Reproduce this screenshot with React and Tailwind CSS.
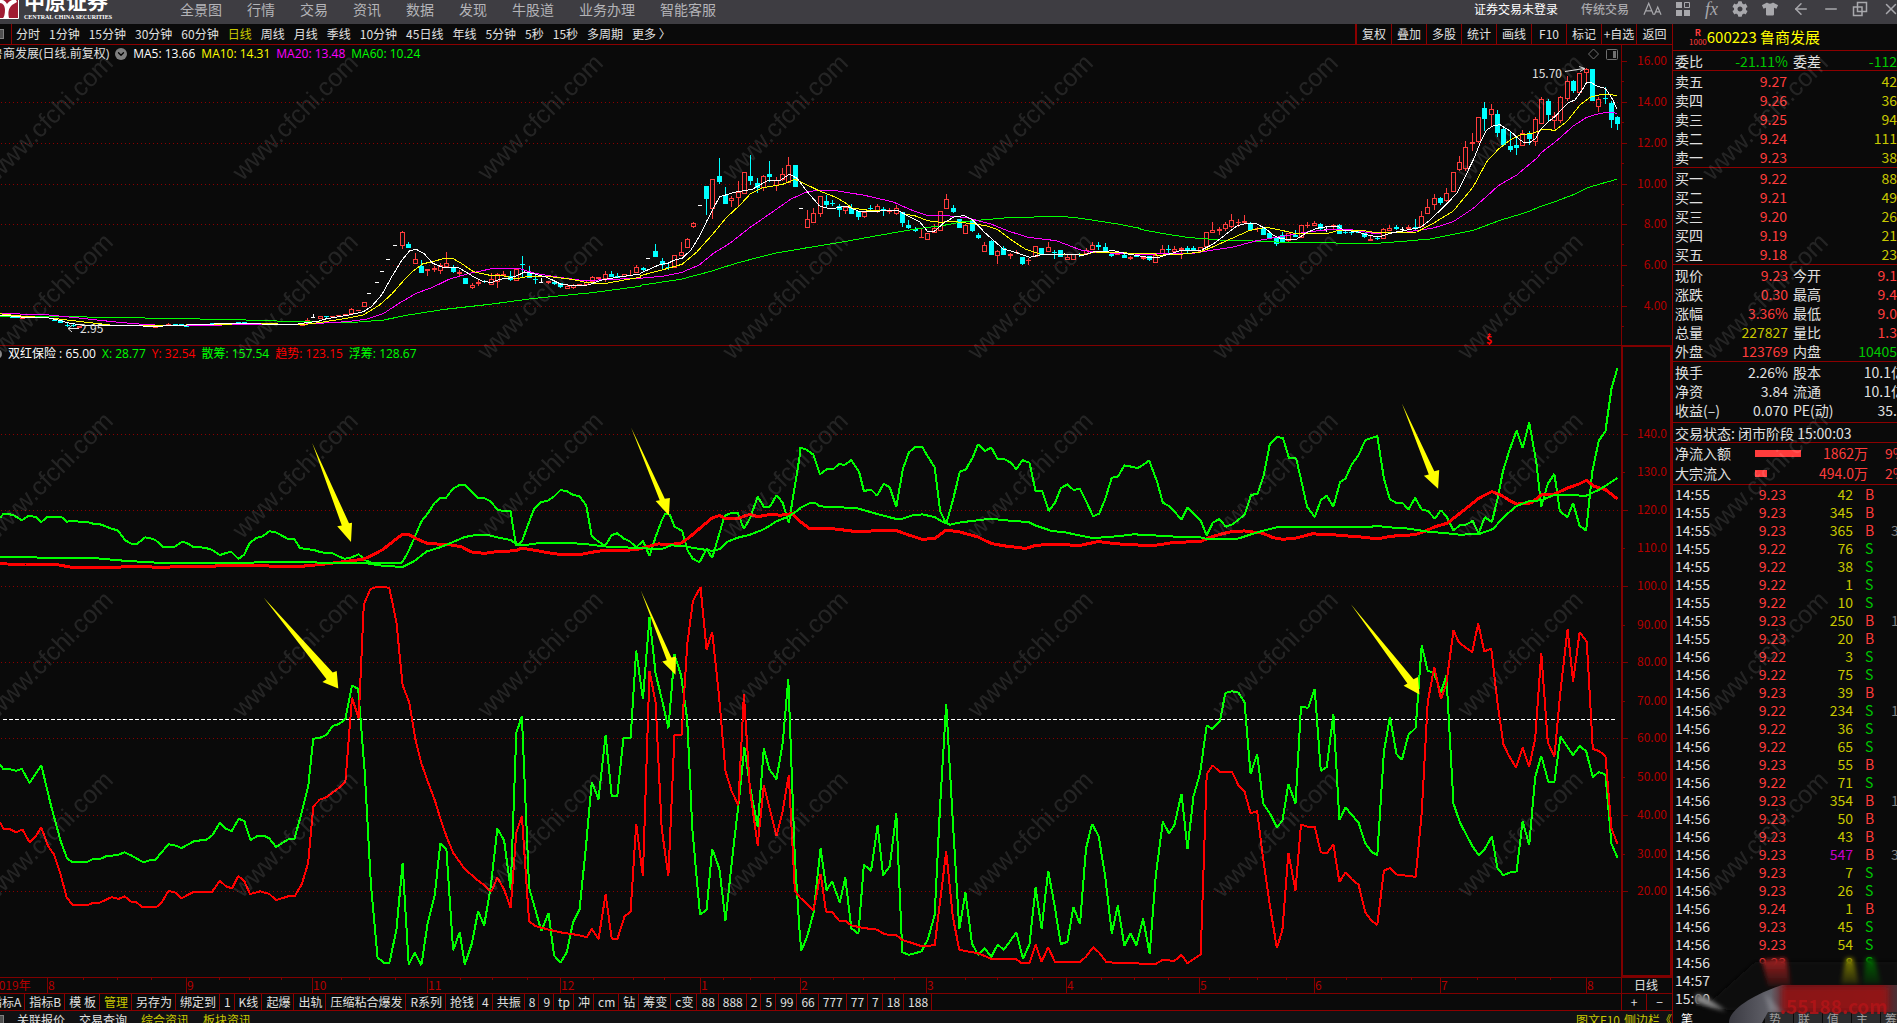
import React from "react";
import {
  FaTshirt,
  FaCog,
} from "react-icons/fa";
import { ArrowLeft, Minus, X, ChevronDown } from "lucide-react";

const navigation = ["全景图", "行情", "交易", "资讯", "数据", "发现", "牛股道", "业务办理", "智能客服"];

const periods = [
  "分时", "1分钟", "15分钟", "30分钟", "60分钟", "日线", "周线", "月线", "季线",
  "10分钟", "45日线", "年线", "5分钟", "5秒", "15秒", "多周期", "更多 〉",
];

const tools = ["复权", "叠加", "多股", "统计", "画线", "F10", "标记", "+自选", "返回"];

const templates = [
  "指标A", "指标B", "模 板", "管理", "另存为", "绑定到", "1", "K线", "起爆", "出轨",
  "压缩粘合爆发", "R系列", "抢钱", "4", "共振", "8", "9", "tp", "冲", "cm", "钻", "筹变",
  "c变", "88", "888", "2", "5", "99", "66", "777", "77", "7", "18", "188",
];

const sells = [["卖五", "9.27", "42"], ["卖四", "9.26", "36"], ["卖三", "9.25", "94"], ["卖二", "9.24", "111"], ["卖一", "9.23", "38"]];
const buys = [["买一", "9.22", "88"], ["买二", "9.21", "49"], ["买三", "9.20", "26"], ["买四", "9.19", "21"], ["买五", "9.18", "23"]];

const RED = "text-[#ff3c3c]";
const GREEN = "text-[#00c800]";
const YELLOW = "text-[#c8c800]";
const WHITE = "text-[#e0e0e0]";

const quotes = [
  ["现价", "9.23", RED, "今开", "9.1", RED],
  ["涨跌", "0.30", RED, "最高", "9.4", RED],
  ["涨幅", "3.36%", RED, "最低", "9.0", RED],
  ["总量", "227827", YELLOW, "量比", "1.3", RED],
  ["外盘", "123769", RED, "内盘", "10405", GREEN],
];

const finance = [
  ["换手", "2.26%", WHITE, "股本", "10.1亿", WHITE],
  ["净资", "3.84", WHITE, "流通", "10.1亿", WHITE],
  ["收益(–)", "0.070", WHITE, "PE(动)", "35.", WHITE],
];

// time, price, volume, side, count
const ticks = [
  ["14:55", "9.23", "42", "B"],
  ["14:55", "9.23", "345", "B"],
  ["14:55", "9.23", "365", "B", "3"],
  ["14:55", "9.22", "76", "S"],
  ["14:55", "9.22", "38", "S"],
  ["14:55", "9.22", "1", "S"],
  ["14:55", "9.22", "10", "S"],
  ["14:55", "9.23", "250", "B", "1"],
  ["14:55", "9.23", "20", "B"],
  ["14:56", "9.22", "3", "S"],
  ["14:56", "9.22", "75", "S"],
  ["14:56", "9.23", "39", "B"],
  ["14:56", "9.22", "234", "S", "1"],
  ["14:56", "9.22", "36", "S"],
  ["14:56", "9.22", "65", "S"],
  ["14:56", "9.23", "55", "B"],
  ["14:56", "9.22", "71", "S"],
  ["14:56", "9.23", "354", "B", "1"],
  ["14:56", "9.23", "50", "B"],
  ["14:56", "9.23", "43", "B"],
  ["14:56", "9.23", "547", "B", "3"],
  ["14:56", "9.23", "7", "S"],
  ["14:56", "9.23", "26", "S"],
  ["14:56", "9.24", "1", "B"],
  ["14:56", "9.23", "45", "S"],
  ["14:56", "9.23", "54", "S"],
  ["14:56", "9.23", "8", "S"],
  ["14:57"],
  ["15:00"],
];

// Each chart block has its own origin and units per pixel
const blocks = {
  priceA: { ox: 0, oy: 180, sx: 2.45, sy: 3 },
  priceB: { ox: 640, oy: 120, sx: 2.45, sy: 3 },
  priceC: { ox: 1140, oy: 50, sx: 3, sy: 3 },
  lineA: { ox: 0, oy: 400, sx: 1.96, sy: 2.6133 },
  lineB: { ox: 780, oy: 400, sx: 1.8233, sy: 2.6133 },
};

// kind (u = up, d = down, w = flat), x, high, top, bottom, low
const candles = {
  priceA: `d 12 406 408 412 412,d 30 409 409 413 413,d 42 409 410 414 414,u 55 412 412 416 416,d 133 418 419 422 422,
d 148 419 419 428 428,d 165 430 434 437 442,d 180 430 435 438 442,u 195 438 438 443 443,d 260 434 434 438 438,
u 380 439 439 443 443,u 412 429 433 436 438,d 430 432 432 435 435,d 445 432 432 435 435,d 458 436 436 440 440,
d 520 429 429 432 432,d 535 429 429 432 432,d 585 426 427 430 430,d 600 427 427 430 430,u 678 432 433 436 436,
u 695 433 433 436 436,u 710 433 433 436 436,u 725 433 433 436 436,u 740 430 430 437 437,u 754 414 421 426 428,
w 768 402 410 412 412,u 785 408 408 416 416,d 800 408 408 411 413,u 815 407 407 410 410,u 830 405 405 408 408,
u 846 402 402 405 405,u 861 384 388 402 402,u 878 391 391 394 394,u 893 367 367 381 381,w 906 338 338 338 338,
w 924 307 307 307 307,w 938 274 274 274 274,w 953 238 238 238 238,w 970 196 196 196 196,u 986 152 157 197 208,
d 1001 186 192 204 204,u 1018 220 238 251 251,d 1033 240 258 278 278,u 1047 268 268 272 288,u 1064 258 265 271 277,
u 1079 248 254 272 281,u 1094 216 250 262 262,d 1111 255 260 276 279,u 1126 270 277 281 289,d 1141 293 293 312 312,
u 1157 310 314 323 327,u 1172 300 305 313 319,d 1188 300 303 306 310,u 1204 279 297 314 314,u 1219 279 282 306 323,
u 1234 272 283 287 287,d 1250 273 289 300 304,u 1265 264 267 302 302,d 1280 228 251 255 290,d 1297 258 276 294 294,
d 1312 284 297 300 312,w 1327 294 306 308 308,u 1344 302 304 308 313,d 1358 302 305 311 315,d 1373 309 309 321 323,
u 1390 316 319 326 326,u 1405 312 314 323 327,u 1420 313 313 316 316,u 1437 304 305 314 314,u 1452 287 292 305 305,
u 1466 290 292 298 298,u 1484 273 282 298 305,d 1498 273 282 291 291,d 1514 279 288 294 294,u 1530 283 283 290 290,
u 1545 269 284 288 288,u 1560 256 262 279 279`,
  priceB: `d 8 440 444 450 455,w 22 415 415 415 415,d 38 372 393 411 411,d 55 414 423 435 447,d 69 430 441 444 449,
u 85 406 406 443 443,u 101 366 397 407 407,u 116 354 356 383 383,u 131 305 308 320 325,w 147 256 256 256 256,
d 163 198 198 237 285,u 177 178 178 268 296,d 195 114 168 186 192,d 209 201 226 251 251,u 224 228 235 242 261,
u 241 183 217 233 258,u 256 157 157 221 221,d 271 105 168 183 195,d 288 174 189 203 218,u 302 165 169 204 213,
d 317 122 162 171 186,u 334 171 181 197 213,u 349 144 163 179 184,u 364 111 136 188 188,d 381 135 135 200 200,
w 395 265 265 265 265,u 410 270 298 323 323,u 425 264 280 308 308,u 442 229 229 281 291,d 457 225 243 255 264,
d 471 240 248 252 258,d 489 252 258 271 290,u 503 260 262 273 282,d 518 252 264 282 282,d 535 273 273 291 300,
u 550 272 276 290 293,d 565 255 263 268 276,u 582 252 259 273 278,d 597 261 267 273 288,u 611 263 272 276 282,
u 628 256 265 281 285,d 643 276 276 309 321,d 658 300 315 324 327,d 675 321 328 332 336,u 689 325 350 354 354,
u 704 339 339 359 359,u 721 313 325 338 338,u 736 274 274 332 332,u 751 222 238 266 266,d 768 255 264 276 280,
d 783 297 297 324 324,u 797 312 314 341 341,d 814 297 303 333 336,d 829 339 346 354 357,u 844 366 376 395 395,
d 861 360 363 405 405,u 876 390 394 407 432,d 890 378 384 405 405,u 908 398 402 407 418,u 922 390 395 398 403,
d 937 411 411 432 435,u 953 415 420 424 435,u 969 379 379 410 410,d 984 384 384 404 404,u 1001 366 380 395 395,
d 1016 390 395 400 417,d 1030 390 390 411 411,u 1047 405 411 419 419,u 1062 403 403 419 419,d 1076 400 402 406 411,
u 1094 384 390 403 403,u 1109 366 376 390 390,d 1123 366 375 381 390,d 1140 369 381 392 392,d 1155 402 402 408 412,
u 1170 400 402 406 406,d 1187 402 404 414 414,u 1202 409 412 416 420,d 1216 402 406 412 412`,
  priceC: `u 10 618 620 626 629,d 28 618 618 629 633,u 46 610 615 638 638,u 67 584 598 612 612,d 85 585 597 600 612,
u 104 588 597 605 610,u 124 590 595 600 627,d 142 588 594 602 608,d 161 588 595 599 603,u 180 592 592 606 606,
u 200 547 547 591 591,u 217 515 539 548 548,u 238 530 538 544 555,u 256 516 523 538 542,u 274 492 511 530 534,
u 295 508 515 520 530,u 313 494 514 520 520,d 331 516 519 540 540,u 352 530 534 538 545,d 370 533 533 555 555,
d 388 546 549 564 564,d 409 564 564 582 587,d 427 546 556 577 577,u 445 550 550 573 577,d 466 540 555 560 560,
u 484 526 526 563 563,u 502 515 525 529 534,u 523 513 519 527 527,d 541 519 522 537 540,w 560 532 538 540 546,
u 580 522 525 530 540,d 598 522 524 552 552,d 616 542 546 549 553,d 634 543 546 549 555,d 654 542 546 550 550,
d 673 548 548 560 563,u 691 555 568 574 574,d 712 560 564 567 570,u 730 534 538 566 566,u 748 525 533 542 542,
d 769 525 531 537 540,w 787 532 538 541 546,u 805 525 532 536 536,d 826 507 532 535 540,u 844 484 499 532 532,
u 862 447 472 491 491,u 883 433 445 464 479,d 901 441 444 459 464,u 919 414 430 452 457,u 940 367 367 425 425,
u 958 318 337 359 364,u 976 274 292 356 364,u 997 250 276 281 303,u 1015 202 202 275 278,d 1033 156 174 207 243,
u 1054 163 178 194 232,d 1072 180 192 249 261,d 1090 231 237 285 285,d 1111 243 288 300 306,d 1129 264 285 294 315,
u 1147 240 248 287 287,d 1168 243 250 267 285,u 1186 202 208 275 287,u 1204 142 146 223 223,d 1225 147 153 195 213,
u 1243 186 199 212 237,u 1261 138 142 212 218,u 1282 78 94 146 152,d 1300 90 94 123 129,u 1318 70 70 130 130,
u 1339 54 58 68 98,d 1357 57 57 153 153,u 1375 141 148 171 187,d 1396 111 144 147 162,d 1414 153 159 210 234,
d 1432 198 201 222 240`,
};

const averages = [
  {
    name: "MA60",
    color: "#00ff00",
    priceA: "0,409 130,409 250,412 400,415 580,419 700,424 820,427 880,426 940,420 1000,405 1090,388 1200,373 1310,355 1450,338 1568,319",
    priceB: "0,496 100,478 170,455 240,428 330,400 410,383 500,365 590,345 680,326 740,317 790,305 900,293 1030,289 1080,295 1170,312 1225,325",
    priceC: "0,538 60,549 140,562 240,570 370,574 460,579 540,577 610,580 710,580 790,574 870,567 930,555 1000,541 1080,511 1160,487 1200,470 1240,457 1300,434 1340,414 1380,402 1430,388",
  },
  {
    name: "MA20",
    color: "#ff00ff",
    priceA: "0,400 120,405 200,415 290,427 360,434 420,437 520,436 600,433 720,434 780,430 850,425 900,417 940,400 980,368 1020,340 1060,322 1100,298 1150,280 1210,265 1270,265 1310,280 1370,292 1430,302 1500,298 1568,295",
    priceB: "0,475 60,468 103,457 145,435 180,400 220,370 270,322 320,280 370,237 410,215 440,211 480,212 550,226 620,246 665,270 700,285 760,288 800,293 860,312 900,332 950,352 1020,362 1080,390 1120,398 1180,400 1225,403",
    priceC: "0,613 160,610 220,600 280,591 350,572 420,560 500,546 580,538 640,540 700,550 800,546 880,534 940,515 1000,475 1050,430 1075,407 1130,375 1190,325 1205,307 1250,272 1300,228 1340,202 1380,190 1410,187 1430,190",
  },
  {
    name: "MA10",
    color: "#ffff00",
    priceA: "0,401 40,407 130,415 200,425 270,435 380,438 420,436 540,433 600,431 680,432 740,434 770,430 850,415 890,405 930,375 960,342 990,300 1010,275 1035,252 1065,243 1090,235 1110,236 1130,250 1160,275 1200,286 1235,288 1265,296 1290,290 1340,289 1400,298 1440,308 1480,311 1530,300 1568,292",
    priceB: "0,467 60,448 103,433 140,395 180,340 210,295 245,255 270,222 300,203 350,193 380,178 410,195 440,213 480,232 505,250 520,264 555,270 630,270 650,282 675,288 705,302 735,307 765,304 820,312 850,318 875,328 910,360 945,388 985,404 1090,404 1115,396 1180,398 1225,401",
    priceC: "0,610 45,611 50,616 130,612 180,606 220,590 280,563 330,541 380,532 420,540 460,549 510,552 560,551 600,540 660,540 710,548 830,546 880,520 940,483 1000,410 1040,335 1075,298 1110,270 1140,255 1180,249 1210,238 1245,241 1280,215 1320,165 1350,142 1385,133 1432,136",
  },
  {
    name: "MA5",
    color: "#ffffff",
    priceA: "0,405 60,412 120,414 150,422 165,428 200,435 260,438 310,436 350,438 400,438 440,436 500,433 580,430 640,432 720,434 750,428 780,424 800,416 825,411 855,405 890,395 910,380 935,345 960,290 985,240 1003,213 1020,208 1040,222 1060,250 1085,262 1125,264 1160,290 1185,305 1205,307 1225,298 1250,294 1270,285 1285,276 1310,282 1340,292 1375,313 1400,316 1440,315 1475,300 1510,292 1568,282",
    priceB: "0,460 50,433 68,430 85,420 103,415 125,390 145,350 165,300 195,230 235,216 275,208 315,180 345,180 366,163 385,175 410,215 440,258 460,265 480,264 505,258 540,276 575,274 630,270 660,290 685,305 705,335 720,335 745,308 770,290 795,287 815,300 845,338 890,387 920,397 955,412 980,405 1040,402 1085,406 1110,396 1160,392 1195,402 1225,408",
    priceC: "0,618 30,623 60,621 120,602 185,600 220,582 255,555 290,528 320,520 350,522 375,535 400,555 420,565 450,569 470,567 500,548 530,535 560,530 595,530 610,540 650,545 690,557 720,560 750,550 800,540 840,533 870,510 920,462 950,430 975,380 1000,330 1020,280 1040,240 1060,227 1080,224 1110,243 1140,270 1155,279 1170,277 1187,265 1200,240 1225,215 1245,200 1265,178 1285,158 1305,150 1325,122 1340,97 1355,99 1375,110 1395,115 1410,135 1420,152 1430,177",
  },
];

const indicators = [
  {
    name: "散筹",
    color: "#00ff00",
    width: 2,
    lineA: "0,308 7,297 18,297 22,301 28,302 43,314 57,302 70,306 81,319 93,305 120,305 131,318 143,316 155,318 170,318 182,323 192,323 205,329 218,336 231,341 245,366 258,376 269,376 284,359 294,361 305,366 319,384 342,384 356,371 365,373 379,384 402,386 416,392 431,405 453,396 467,415 478,405 490,373 502,361 515,356 528,343 541,346 552,354 563,362 577,364 588,387 603,390 615,392 627,397 640,400 652,401 664,409 676,415 690,411 703,403 715,418 728,425 788,425 800,397 812,361 826,317 838,297 852,269 863,256 874,256 888,231 901,222 911,222 924,239 936,256 949,256 962,265 975,287 987,290 1001,290 1005,330 1012,380 1023,370 1035,325 1047,284 1060,267 1074,263 1086,252 1098,236 1110,237 1123,248 1136,252 1149,275 1160,356 1173,370 1186,381 1199,353 1210,348 1222,362 1234,369 1247,385 1260,368 1273,408 1285,358 1297,315 1304,297 1313,300 1322,331 1337,342 1348,395 1358,415 1371,424 1385,389 1396,413 1408,358 1420,303 1433,295 1446,295 1458,337 1470,309 1485,253 1497,279 1509,279 1522,249 1534,268 1546,322 1556,240 1568,142",
    lineB: "37,124 48,130 61,143 73,194 85,181 97,181 108,166 117,170 130,157 144,187 153,238 166,234 177,250 189,219 200,228 212,279 224,180 235,137 247,122 259,122 268,144 282,176 292,290 303,324 315,263 328,187 339,181 351,151 361,116 374,133 385,124 397,154 408,154 420,163 431,181 442,157 455,164 466,238 478,237 490,290 502,267 512,231 524,220 535,235 547,232 559,267 571,304 582,297 593,259 605,203 616,201 628,171 640,174 652,178 663,169 673,158 688,215 698,268 710,278 722,296 732,313 743,281 756,299 767,315 778,354 789,321 801,311 813,331 825,325 847,300 859,248 871,245 882,197 893,115 906,97 917,99 928,152 941,152 952,220 961,279 975,306 986,262 997,250 1009,279 1021,215 1031,205 1043,167 1055,144 1067,105 1089,94 1101,205 1112,260 1123,268 1135,269 1146,286 1158,256 1170,286 1181,290 1194,310 1205,288 1215,304 1228,341 1240,327 1252,325 1263,316 1274,349 1285,306 1298,319 1308,260 1318,187 1330,132 1343,80 1354,126 1366,58 1379,163 1388,278 1400,219 1412,193 1422,291 1436,306 1446,269 1458,329 1470,341 1481,187 1493,106 1505,82 1516,-30 1527,-84",
  },
  {
    name: "趋势",
    color: "#ff0000",
    width: 3,
    lineA: "0,428 50,430 110,430 140,437 230,437 268,434 305,437 410,435 430,433 515,432 540,436 580,436 612,432 640,428 690,420 712,416 728,407 750,391 770,370 788,352 802,352 815,362 838,375 880,378 905,384 924,397 950,401 975,396 1010,394 1023,387 1045,392 1074,399 1100,404 1140,403 1173,395 1195,393 1220,394 1250,390 1270,383 1290,376 1313,378 1335,374 1350,360 1371,336 1396,308 1410,302 1420,309 1448,309 1460,303 1470,299 1485,305 1510,299 1530,301 1552,297 1568,318",
    lineB: "37,318 55,337 95,336 145,345 177,341 212,341 235,353 259,364 282,362 303,340 328,345 361,358 385,375 408,381 448,388 466,380 495,377 547,380 580,370 616,376 652,379 688,379 720,372 767,370 782,360 800,352 820,345 847,342 880,348 900,360 917,364 940,361 970,350 1000,351 1030,355 1060,358 1089,363 1115,356 1158,352 1175,344 1194,331 1217,322 1230,307 1252,282 1274,257 1298,239 1315,249 1330,262 1343,272 1370,269 1388,248 1412,246 1436,230 1458,219 1470,210 1485,226 1505,234 1527,259",
  },
  {
    name: "浮筹",
    color: "#00ff00",
    width: 2,
    lineA: "0,410 43,411 143,413 157,412 192,414 232,419 268,422 319,426 365,426 480,426 510,424 560,424 640,425 715,426 754,434 790,436 812,421 836,396 863,385 888,371 911,358 936,352 960,354 985,362 1001,366 1015,379 1030,379 1050,375 1074,373 1110,373 1150,377 1190,383 1240,386 1285,389 1300,388 1315,380 1337,381 1360,387 1396,394 1410,390 1425,371 1445,360 1470,352 1497,338 1522,317 1546,304 1568,284",
    lineB: "37,282 54,270 65,270 73,278 95,279 141,283 177,298 212,311 224,310 240,302 259,299 270,302 282,306 296,318 310,326 328,320 345,317 385,310 408,314 453,319 466,328 495,342 520,346 547,354 571,361 616,356 645,351 685,354 720,357 767,359 780,364 836,362 859,351 882,341 910,331 940,331 970,333 1067,333 1089,329 1112,333 1140,335 1181,344 1215,348 1240,352 1275,350 1300,337 1320,305 1343,277 1366,264 1388,262 1412,248 1470,250 1493,235 1510,220 1527,203",
  },
  {
    name: "X",
    color: "#00ff00",
    width: 2,
    lineA: "0,953 6,964 20,965 32,969 43,964 58,1001 81,954 100,1060 119,1153 132,1199 143,1208 169,1208 182,1200 195,1200 209,1192 231,1189 244,1182 257,1190 281,1208 293,1203 304,1202 330,1161 343,1164 356,1171 380,1153 404,1149 416,1138 431,1105 441,1119 454,1127 468,1094 479,1101 491,1150 505,1139 516,1138 528,1146 541,1168 565,1148 577,1147 592,1075 604,1010 614,885 627,883 640,875 652,852 664,847 677,834 690,746 702,755 715,975 727,1265 740,1457 754,1472 763,1472 777,1385 789,1211 801,1475 813,1445 826,1477 838,1368 852,1295 863,1159 875,1173 888,1438 901,1391 911,1475 925,1420 937,1336 949,1373 962,1270 975,1120 988,1151 1001,1280 1012,870 1023,827 1037,1275 1050,1335 1061,1388 1075,1340 1086,1452 1099,1470 1111,1443 1123,1365 1136,1331 1149,1160 1160,998 1173,1044 1187,877 1199,1034 1210,1034 1222,883 1236,883 1247,655 1260,782 1273,568 1285,715 1297,780 1310,858 1322,665 1335,720 1347,835 1357,1120 1372,1345 1385,1332 1396,1173 1410,1225 1422,1360 1437,1175 1448,1050 1459,907 1470,1010 1485,1115 1497,910 1508,966 1522,991 1534,897 1545,729 1558,1200 1568,1405",
    lineB: "37,1410 39,1439 50,1400 61,1340 74,1172 85,1281 95,1258 109,1313 119,1248 130,1380 143,1395 153,1214 166,1231 178,1112 188,1242 200,1219 212,1080 223,1443 235,1450 258,1441 270,1408 282,1345 292,1060 303,794 315,1100 327,1383 338,1287 350,1420 361,1450 373,1432 385,1456 397,1423 408,1437 431,1391 443,1461 455,1422 466,1274 477,1382 489,1230 501,1325 512,1422 524,1416 535,1325 547,1370 558,1172 569,1108 581,1140 593,1245 605,1394 616,1321 628,1427 639,1394 650,1425 662,1355 674,1447 685,1245 698,1102 709,1132 719,1112 732,1029 743,1173 754,1036 766,975 778,850 788,860 802,840 812,766 824,761 836,765 847,790 858,978 870,925 881,1055 893,1080 906,1116 916,1100 927,1003 940,1055 950,802 963,804 975,755 986,969 997,959 1009,822 1020,1098 1031,1065 1055,1105 1067,1158 1078,1180 1089,1190 1101,920 1112,828 1124,925 1134,940 1146,875 1159,857 1170,641 1181,708 1192,712 1205,765 1215,720 1228,1055 1240,1105 1262,1165 1274,1190 1285,1173 1298,1140 1308,1223 1319,1242 1330,1235 1343,1232 1354,1101 1366,1163 1377,985 1388,930 1401,998 1412,998 1423,880 1446,928 1458,904 1470,918 1482,986 1493,972 1505,979 1516,1160 1527,1196",
  },
  {
    name: "Y",
    color: "#ff0000",
    width: 2,
    lineA: "0,1104 7,1121 20,1122 32,1130 44,1122 58,1156 69,1142 81,1117 94,1165 106,1188 119,1241 131,1301 143,1320 172,1320 183,1314 195,1314 219,1299 232,1304 244,1297 257,1311 267,1312 279,1326 306,1326 318,1311 330,1283 343,1287 356,1302 380,1285 416,1285 431,1256 443,1271 455,1276 467,1244 479,1258 490,1291 510,1284 528,1291 541,1307 565,1297 578,1296 592,1264 604,1210 614,1062 627,1044 640,1038 664,1014 677,998 690,778 703,832 713,535 726,494 740,488 754,489 763,491 777,580 789,745 802,790 814,885 826,950 840,1003 852,1045 863,1094 875,1140 888,1183 911,1226 937,1256 949,1268 963,1285 975,1248 988,1279 1001,1328 1012,1130 1023,1088 1037,1363 1050,1375 1075,1384 1098,1391 1136,1399 1150,1404 1160,1382 1173,1409 1187,1292 1199,1407 1210,1409 1224,1350 1236,1337 1247,1108 1260,1245 1273,709 1285,790 1297,1120 1310,1244 1322,875 1336,875 1347,640 1358,525 1373,489 1385,652 1396,606 1409,770 1422,970 1434,1022 1447,1059 1458,769 1470,1020 1485,1164 1497,1006 1522,1140 1533,1082 1546,980 1558,1283 1568,1300",
    lineB: "37,1301 61,1333 74,1238 84,1337 95,1338 108,1361 119,1361 130,1373 153,1380 177,1384 188,1394 200,1399 212,1399 223,1411 258,1427 282,1425 292,1310 303,1180 315,1350 327,1437 361,1446 385,1460 431,1462 440,1471 455,1472 466,1423 477,1468 489,1430 501,1468 547,1468 558,1455 571,1430 582,1444 595,1469 616,1471 685,1474 698,1463 719,1466 732,1450 743,1472 754,1461 767,1449 778,978 789,955 802,972 824,972 836,1007 847,1023 858,1080 870,1074 881,1200 893,1320 906,1432 916,1385 927,1183 940,1282 950,1109 963,1116 975,1115 986,1182 997,1185 1009,1161 1020,1260 1031,1234 1043,1253 1055,1267 1067,1338 1078,1360 1089,1372 1101,1230 1112,1223 1124,1240 1159,1246 1170,1080 1181,790 1193,697 1205,782 1215,740 1228,602 1238,634 1262,659 1273,584 1284,657 1297,650 1308,790 1319,900 1330,932 1342,960 1354,909 1366,958 1377,885 1388,662 1400,895 1412,932 1423,760 1436,599 1446,736 1458,607 1471,632 1482,912 1493,917 1505,930 1516,1120 1527,1160",
  },
];

const arrows = [
  ["lineA", "612,112 684,322 690,321 688,371 661,330 670,328"],
  ["lineA", "1237,72 1303,258 1313,256 1311,302 1285,264 1293,262"],
  ["lineA", "517,517 652,712 660,708 663,754 632,737 640,730"],
  ["lineA", "1256,498 1316,673 1325,670 1324,718 1298,683 1307,680"],
  ["lineB", "1134,9 1193,186 1202,183 1200,232 1174,198 1183,195"],
  ["lineB", "1041,534 1155,730 1163,724 1166,770 1137,747 1144,741"],
];

const priceAxis = [["16.00", 61], ["14.00", 102], ["12.00", 143], ["10.00", 184], ["8.00", 224], ["6.00", 265], ["4.00", 306]];
const lowerAxis = [
  ["140.0", 434], ["130.0", 472], ["120.0", 510], ["110.0", 548], ["100.0", 586], ["90.00", 625], ["80.00", 662],
  ["70.00", 701], ["60.00", 738], ["50.00", 777], ["40.00", 815], ["30.00", 854], ["20.00", 891],
];
const months = [["8", 47], ["9", 186], ["10", 312], ["11", 427], ["12", 560], ["1", 700], ["2", 800], ["3", 926], ["4", 1066], ["5", 1199], ["6", 1314], ["7", 1440], ["8", 1586]];
const weeks = [83, 117, 151, 219, 249, 281, 341, 369, 395, 460, 492, 527, 593, 633, 664, 723, 750, 774, 833, 863, 894, 965, 997, 1032, 1101, 1134, 1168, 1229, 1257, 1286, 1346, 1381, 1411, 1477, 1515, 1550];

const toPoints = (block, text) => {
  const { ox, oy, sx, sy } = blocks[block];
  return text
    .split(" ")
    .map((pair) => {
      const [x, y] = pair.split(",").map(Number);
      return `${(ox + x / sx).toFixed(1)},${(oy + y / sy).toFixed(1)}`;
    })
    .join(" ");
};

const Candle = ({ block, row }) => {
  const { ox, oy, sx, sy } = blocks[block];
  const [kind, ...nums] = row.trim().split(" ");
  const x = Math.floor(ox + Number(nums[0]) / sx);
  const [high, top, bottom, low] = nums.slice(1).map((n) => Math.round(oy + Number(n) / sy));
  if (kind === "w") {
    return (
      <g fill="#fff">
        <rect x={x - 2} y={top} width="4" height="1" />
        {low > high && <rect x={x} y={high} width="1" height={low - high} />}
      </g>
    );
  }
  const height = Math.max(bottom - top, 1);
  if (kind === "d") {
    return (
      <g fill="#00ffff">
        <rect x={x - 2} y={top} width="5" height={height} />
        <rect x={x} y={high} width="1" height={Math.max(low - high, 1)} />
      </g>
    );
  }
  return (
    <g fill="#ff3c3c">
      {height < 3 ? (
        <rect x={x - 2} y={top} width="5" height={height} />
      ) : (
        <path
          fillRule="evenodd"
          d={`M${x - 2} ${top}h5v${height}h-5zM${x - 1} ${top + 1}v${height - 2}h3v${2 - height}z`}
        />
      )}
      {top > high && <rect x={x} y={high} width="1" height={top - high} />}
      {low > bottom && <rect x={x} y={bottom} width="1" height={low - bottom} />}
    </g>
  );
};

const Chart = () => (
  <svg viewBox="0 45 1672 949" preserveAspectRatio="xMinYMin meet" className="block h-full w-full">
    <g shapeRendering="crispEdges">
      {/* Grid */}
      <g stroke="#8c0000" strokeDasharray="1 3">
        {priceAxis.slice(1).map(([label, y]) => (
          <path key={label} d={`M1 ${y}.5H1618`} />
        ))}
        {lowerAxis.filter((_, i) => i % 2 === 0).map(([label, y]) => (
          <path key={label} d={`M1 ${y}.5H1618`} />
        ))}
      </g>
      <path d="M3 719.5H1615" stroke="#fff" strokeDasharray="4 2" />

      {/* Frame and ticks */}
      <g fill="none" stroke="#800000">
        <path d="M0 345.5H1672M1621.5 45V346" />
        <path d="M1622 346V976H1671V346Z" strokeWidth="2" />
        {priceAxis.map(([label, y]) => (
          <path key={label} d={`M1621 ${y}.5h6M1621 ${y + 20}.5h3`} />
        ))}
        {lowerAxis.map(([label, y], i) => (
          <path key={label} d={`M1622 ${y}.5h${i % 2 ? 3 : 6}`} />
        ))}
        <path d="M0 977.5H1672M0 993.5H1672M1621.5 977V993" />
        {months.map(([label, x]) => (
          <path key={x} d={`M${x}.5 977V993`} />
        ))}
        {weeks.map((x) => (
          <path key={x} d={`M${x}.5 977v3`} />
        ))}
      </g>

      {/* Candles */}
      {Object.keys(candles).map((block) =>
        candles[block].split(",").map((row) => <Candle key={block + row} block={block} row={row} />)
      )}

      {/* Moving averages */}
      {averages.map((line) => (
        <g key={line.name} fill="none" stroke={line.color}>
          <polyline points={`${toPoints("priceA", line.priceA)} ${toPoints("priceB", line.priceB)} ${toPoints("priceC", line.priceC)}`} />
        </g>
      ))}

      {/* Indicator lines */}
      {indicators.map((line) => (
        <polyline
          key={line.name}
          fill="none"
          stroke={line.color}
          strokeWidth={line.width}
          strokeLinejoin="bevel"
          points={`${toPoints("lineA", line.lineA)} ${toPoints("lineB", line.lineB)}`}
        />
      ))}
    </g>

    {arrows.map(([block, points]) => (
      <polygon key={points} points={toPoints(block, points)} fill="#ffff00" />
    ))}

    {/* Axis labels */}
    <g fill="#b40000" fontSize="12" textAnchor="end">
      {[...priceAxis, ...lowerAxis].map(([label, y]) => (
        <text key={label} x="1667" y={y + 4}>{label}</text>
      ))}
    </g>
    <g fill="#b40000" fontSize="12">
      <text x="-8" y="990">2019年</text>
      {months.map(([label, x]) => (
        <text key={x} x={x + 1} y="990">{label}</text>
      ))}
    </g>
    <text x="1634" y="990" fontSize="12" fill="#e0e0e0">日线</text>

    {/* High and low marks */}
    <g fontSize="12" fill="#e0e0e0">
      <text x="1532" y="78">15.70</text>
      <text x="80" y="333">2.95</text>
    </g>
    <g fill="none" stroke="#e0e0e0">
      <path d="M1565 71.5L1584 68.5M1579 66.5L1585 68.5L1580 71.5" />
      <path d="M79 328.5H68M72 325.5L68 328.5L72 332" />
    </g>
    <text x="1486" y="344" fontSize="11" fontWeight="bold" fill="#ff0000">$</text>
    <path d="M1489.5 333l-2 2h4z" fill="#ff0000" />

    {/* Corner controls */}
    <path d="M1593.5 49l5 5-5 5-5-5z" fill="none" stroke="#707070" />
    <rect x="1606.5" y="49.5" width="11" height="10" rx="1" fill="none" stroke="#707070" />
    <rect x="1613" y="51" width="3" height="7" fill="#707070" />
  </svg>
);

const Logo = () => (
  <svg viewBox="0 0 116 24" className="h-6 w-[116px] shrink-0">
    <path d="M0 0h18v18H0z" fill="#a01c32" />
    <path d="M0 3c3 0 5 3 5 7s-1 7-2 8h6c-1-5-1-9 3-13l5-3-1-2h-4C9 1 8 3 7 4 6 2 4 0 2 0H0z" fill="#fff" />
    <path d="M0 18.500h18.500V0" fill="none" stroke="#fff" />
    <text x="24" y="9" fontSize="21" fontWeight="700" fill="#fff">中原证券</text>
    <text x="24" y="19" fontSize="6" fontWeight="700" fill="#fff" fontFamily="Liberation Serif, serif">CENTRAL CHINA SECURITIES</text>
  </svg>
);

const Header = () => (
  <header className="flex h-6 shrink-0 items-start overflow-hidden bg-[#3e3d42]">
    <Logo />
    <nav className="ml-16 flex h-[18px] items-center gap-[25px] text-sm leading-[18px] text-[#b4b4b8]">
      {navigation.map((item) => (
        <a key={item} href="#" className="whitespace-nowrap">{item}</a>
      ))}
    </nav>
    <div className="ml-auto flex h-[18px] items-center whitespace-nowrap text-xs leading-[18px] text-[#a8a8ac]">
      <button className="text-white">证券交易未登录</button>
      <button className="ml-[23px] font-medium">传统交易</button>
      <div className="ml-3.5 flex w-[254px] shrink-0 items-center gap-[14px]">
        <button aria-label="字体" className="w-[18px]">
          <svg viewBox="0 0 20 16" className="h-4 w-[19px]" fill="none" stroke="currentColor" strokeWidth="1.300">
            <path d="M1 14L6 2l5 12M3 10h6M12 14l3.500-8L19 14M13 11h5" />
          </svg>
        </button>
        <button aria-label="布局" className="w-4">
          <svg viewBox="0 0 16 16" className="size-4" fill="currentColor">
            <path d="M1 1h6v6H1zM1 9h6v6H1zM9 9h6v6H9z" />
            <path d="M9.500 1.500h5v5h-5z" fill="none" stroke="currentColor" />
          </svg>
        </button>
        <button aria-label="公式" className="w-4 font-['Liberation_Serif',serif] text-lg leading-4 italic">fx</button>
        <button aria-label="设置" className="w-4"><FaCog className="size-4" /></button>
        <button aria-label="皮肤" className="w-4"><FaTshirt className="size-4" /></button>
        <button aria-label="后退" className="w-4"><ArrowLeft className="size-[18px]" /></button>
        <button aria-label="最小化" className="w-4"><Minus className="size-[18px]" /></button>
        <button aria-label="还原" className="w-4">
          <svg viewBox="0 0 16 16" className="size-4" fill="none" stroke="currentColor" strokeWidth="1.500">
            <path d="M5.500 1.500h9v9h-9zM10 6v8.500H1.500V6z" />
          </svg>
        </button>
        <button aria-label="关闭" className="w-4"><X className="size-[18px]" /></button>
      </div>
    </div>
  </header>
);

const Toolbar = () => (
  <div className="flex h-[21px] shrink-0 items-stretch border-b border-[#8c0000] text-xs leading-5 whitespace-nowrap text-[#e0e0e0]">
    <div className="flex w-3 items-center border-r border-[#8c0000]">
      <span className="h-2.5 w-1 border border-l-0 border-[#808080] bg-[#505050]"></span>
    </div>
    <div className="ml-1 flex gap-[9px]">
      {periods.map((item) => (
        <button key={item} className={item === "日线" ? "text-[#c8c800]" : ""}>{item}</button>
      ))}
    </div>
    <div className="ml-auto flex border-l-2 border-[#8c0000]">
      {tools.map((item) => (
        <button key={item} className="w-[35px] border-r border-[#8c0000] text-center last:border-r-0">{item}</button>
      ))}
    </div>
  </div>
);

const ChartPanel = () => (
  <section className="relative min-h-0 flex-1">
    <Chart />
    <div className="absolute top-0 -left-[9px] flex items-center gap-1.5 font-['Open_Sans','Noto_Sans_CJK_SC',sans-serif] text-xs leading-[17px] whitespace-nowrap">
      <span className="text-[#e0e0e0]">鲁商发展(日线.前复权)</span>
      <button aria-label="展开" className="flex size-3 items-center justify-center rounded-full bg-[#808080] text-black">
        <ChevronDown className="size-2.5" strokeWidth={3} />
      </button>
      <span className="text-white">MA5: 13.66</span>
      <span className="text-[#ffff00]">MA10: 14.31</span>
      <span className="text-[#ff00ff]">MA20: 13.48</span>
      <span className="text-[#00ff00]">MA60: 10.24</span>
    </div>
    <div className="absolute top-[300px] -left-2 flex items-center gap-1.5 font-['Open_Sans','Noto_Sans_CJK_SC',sans-serif] text-xs leading-[17px] whitespace-nowrap">
      <span className="size-2.5 rounded-full bg-[#808080]"></span>
      <span className="text-white">双红保险 : 65.00</span>
      <span className="text-[#00ff00]">X: 28.77</span>
      <span className="text-[#ff0000]">Y: 32.54</span>
      <span className="text-[#00ff00]">散筹: 157.54</span>
      <span className="text-[#ff0000]">趋势: 123.15</span>
      <span className="text-[#00ff00]">浮筹: 128.67</span>
    </div>
  </section>
);

const TemplateBar = () => (
  <div className="flex h-[17px] shrink-0 border-b border-[#8c0000] text-xs leading-4 whitespace-nowrap text-[#e0e0e0]">
    <div className="-ml-[14px] flex">
      {templates.map((item) => (
        <button key={item} className={`border-r border-[#8c0000] pr-[3px] pl-1 ${item === "管理" ? "text-[#c8c800]" : ""}`}>
          {item}
        </button>
      ))}
    </div>
    <div className="ml-auto flex border-l border-[#8c0000]">
      <button className="w-[25px] border-r border-[#8c0000]">+</button>
      <button className="w-[25px]">−</button>
    </div>
  </div>
);

const NewsBar = () => (
  <div className="flex h-3 shrink-0 items-start overflow-hidden bg-[#111113] text-xs leading-[18px] whitespace-nowrap text-[#e0e0e0]">
    <span className="mt-1 h-2.5 w-1 shrink-0 border border-l-0 border-[#808080] bg-[#505050]"></span>
    <div className="ml-[13px] flex gap-[14px]">
      <a href="#">关联报价</a>
      <a href="#">交易查询</a>
      <a href="#" className="text-[#c8c800]">综合资讯</a>
      <a href="#" className="text-[#c8c800]">板块资讯</a>
    </div>
    <div className="ml-auto flex gap-1 text-[#c8c800]">
      <a href="#">图文F10</a>
      <a href="#">侧边栏《</a>
    </div>
  </div>
);

const OrderTable = ({ rows }) => (
  <div className="shrink-0 border-b border-[#8c0000] pb-px">
    <table className="w-full table-fixed">
      <tbody>
        {rows.map(([label, price, volume]) => (
          <tr key={label} className="h-[19px]">
            <th className="w-[40px] pl-0.5 text-left font-normal text-[#e0e0e0]">{label}</th>
            <td className="w-[74px] text-right text-[#ff3c3c]">{price}</td>
            <td className="text-right text-[#c8c800]">{volume}</td>
          </tr>
        ))}
      </tbody>
    </table>
  </div>
);

const QuoteTable = ({ rows, className = "" }) => (
  <div className={`shrink-0 border-b border-[#8c0000] ${className}`}>
    <table className="w-full table-fixed">
      <tbody>
        {rows.map(([label, value, color, label2, value2, color2]) => (
          <tr key={label} className="h-[19px] whitespace-nowrap">
            <th className="w-[50px] pl-0.5 text-left font-normal text-[#e0e0e0]">{label}</th>
            <td className={`w-[65px] text-right ${color}`}>{value}</td>
            <th className="w-[50px] pl-[5px] text-left font-normal text-[#e0e0e0]">{label2}</th>
            <td className={`text-right ${color2}`}>
              <span className={value2.endsWith("亿") ? "-mr-2" : ""}>{value2}</span>
            </td>
          </tr>
        ))}
      </tbody>
    </table>
  </div>
);

const QuotePanel = () => (
  <aside className="flex w-[225px] shrink-0 flex-col overflow-hidden border-l border-[#8c0000] text-sm leading-[18px] text-[#e0e0e0]">
    <h1 className="flex h-[27px] shrink-0 items-center border-b border-[#8c0000] pl-4 text-[15px] text-[#ffff00]">
      <span className="flex flex-col items-center text-[8px] leading-[9px] text-[#ff3c3c]">
        <b className="text-[9px]">R</b>
        <span>1000</span>
      </span>
      600223 鲁商发展
    </h1>
    <QuoteTable rows={[["委比", "-21.11%", GREEN, "委差", "-112", GREEN]]} />
    <OrderTable rows={sells} />
    <OrderTable rows={buys} />
    <QuoteTable rows={quotes} className="pb-px" />
    <QuoteTable rows={finance} className="pb-[3px]" />
    <p className="h-5 shrink-0 border-b border-[#8c0000] pl-0.5 leading-5">交易状态: 闭市阶段 15:00:03</p>
    <div className="shrink-0 border-b border-[#8c0000] pb-px">
      <table className="w-full table-fixed">
        <tbody>
          <tr className="h-5">
            <th className="w-[82px] pl-0.5 text-left font-normal">净流入额</th>
            <td className="w-[48px]"><div className="h-[7px] w-[46px] bg-[#ff3c3c]"></div></td>
            <td className="w-[65px] text-right text-[#ff3c3c]">1862万</td>
            <td className="overflow-hidden pl-[17px] text-[#ff3c3c]">9%</td>
          </tr>
          <tr className="h-5">
            <th className="pl-0.5 text-left font-normal">大宗流入</th>
            <td><div className="h-[7px] w-3 bg-[#ff3c3c]"></div></td>
            <td className="text-right text-[#ff3c3c]">494.0万</td>
            <td className="overflow-hidden pl-[17px] text-[#ff3c3c]">2%</td>
          </tr>
        </tbody>
      </table>
    </div>
    <div className="min-h-0 flex-1 overflow-hidden">
      <table className="w-full table-fixed">
        <tbody>
          {ticks.map(([time, price, volume, side, count], i) => (
            <tr key={i} className="h-[18px]">
              <td className="w-[50px] pl-0.5">{time}</td>
              <td className="w-[63px] text-right text-[#ff3c3c]">{price}</td>
              <td className={`w-[67px] text-right ${volume === "547" ? "text-[#c800c8]" : "text-[#c8c800]"}`}>{volume}</td>
              <td className={`w-[38px] pl-3 ${side === "B" ? "text-[#ff3c3c]" : "text-[#00c800]"}`}>{side}</td>
              <td className="text-[#808080]">{count}</td>
            </tr>
          ))}
        </tbody>
      </table>
    </div>
    <div className="flex h-3 shrink-0 overflow-hidden text-xs leading-4 text-[#a0a0a0]">
      <button className="w-[92px] shrink-0 bg-[#0a0a0a] pl-2 text-left text-white">笔</button>
      {["势", "联", "值", "主", "筹"].map((item) => (
        <button key={item} className="w-[29px] shrink-0 border-r border-[#0a0a0a] bg-[#2c2c2e] pl-1 text-left">{item}</button>
      ))}
    </div>
  </aside>
);

// Smudged site banner in the bottom right corner
const Banner = () => (
  <svg viewBox="0 0 227 83" className="pointer-events-none absolute right-0 bottom-0 h-[83px] w-[227px]">
    <defs>
      <filter id="soft" x="-20%" y="-20%" width="140%" height="140%">
        <feGaussianBlur stdDeviation="2" />
      </filter>
      <linearGradient id="steel" x1="0" x2="1" y1="0" y2="0">
        <stop offset="0" stopColor="#3a3a42" />
        <stop offset="0.250" stopColor="#62626a" />
        <stop offset="0.350" stopColor="#6a1418" />
        <stop offset="0.900" stopColor="#7a1418" />
        <stop offset="1" stopColor="#4a3034" />
      </linearGradient>
      {["#a02020", "#808000", "#006400"].map((color, i) => (
        <linearGradient key={color} id={`fade${i}`} x1="0" x2="0" y1="0" y2="1">
          <stop offset="0" stopColor={color} />
          <stop offset="1" stopColor={color} stopOpacity="0.200" />
        </linearGradient>
      ))}
    </defs>
    <path d="M26 52L40 62L85 22L227 22V70H58L26 66Z" fill="#0a0a0a" filter="url(#soft)" />
    <g filter="url(#soft)">
      <path d="M92 20L116 18L121 46H98Z" fill="url(#fade0)" />
      <path d="M176 18h7l6 26h-18z" fill="url(#fade1)" />
      <path d="M196 18h8l7 26h-18z" fill="url(#fade2)" />
      <path d="M26 54L36 57L56 71L40 67L26 62Z" fill="#8a8a8a" />
    </g>
    <path d="M59 83C58 70 84 54 112 45H227V72H98L92 83Z" fill="url(#steel)" />
    <path d="M94 52L112 72H100Z" fill="#9a9aa0" opacity="0.500" filter="url(#soft)" />
    <path d="M112 48H218V70H112Z" fill="#a01418" opacity="0.600" filter="url(#soft)" />
    <text x="110" y="74" fontSize="19" fontWeight="700" fill="#b01418" opacity="0.900">.55188.com</text>
  </svg>
);

const Watermark = () => (
  <svg className="pointer-events-none absolute inset-0 h-full w-full" aria-hidden="true">
    <g fill="#ffffff" opacity="0.110" fontSize="25" textAnchor="middle" fontFamily="Liberation Sans, sans-serif">
      {[117, 296, 475, 654, 834].map((y) =>
        [51, 296, 541, 786, 1031, 1276, 1521, 1766].map((x) => (
          <text key={`${x}-${y}`} transform={`translate(${x + 5} ${y + 6}) rotate(-45)`}>www.cfchi.com</text>
        ))
      )}
    </g>
  </svg>
);

const App = () => {
  return (
    <div className="relative flex h-screen flex-col overflow-hidden bg-[#0a0a0a] font-['Noto_Sans_CJK_SC',sans-serif]">
      <Header />
      <main className="flex min-h-0 flex-1">
        <div className="flex min-w-0 flex-1 flex-col">
          <Toolbar />
          <ChartPanel />
          <TemplateBar />
          <NewsBar />
        </div>
        <QuotePanel />
      </main>
      <Watermark />
      <Banner />
    </div>
  );
};

export default App;
